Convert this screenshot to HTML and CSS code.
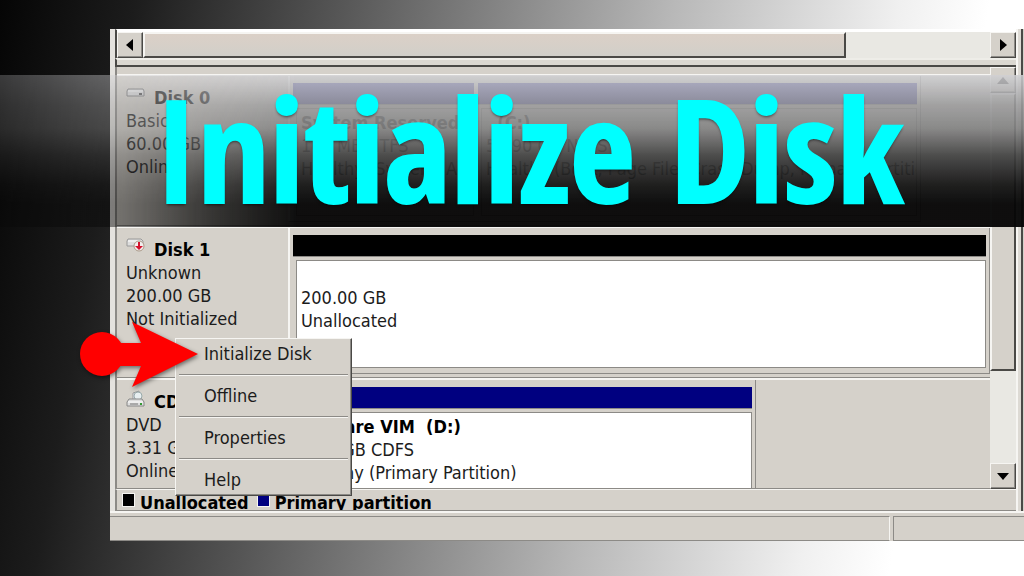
FILE: index.html
```html
<!DOCTYPE html>
<html lang="en">
<head>
  <meta charset="utf-8">
  <title>Initialize Disk</title>
  <link rel="stylesheet" href="styles.css">
</head>
<body>
  <main class="stage">
    <div class="window">
      <div class="pane">
        <div class="hscroll">
          <button class="scroll-btn" aria-label="Scroll left"><svg width="8" height="12"><path d="M7 0v12L0 6z"/></svg></button>
          <div class="hthumb"></div>
          <div class="htrack"></div>
          <button class="scroll-btn" aria-label="Scroll right"><svg width="8" height="12"><path d="M1 0v12l7-6z"/></svg></button>
        </div>
        <div class="splitter"></div>

        <div class="disk-view">
          <div class="disks">
            <section class="disk">
              <div class="disk-info">
                <h2><svg class="icon" width="20" height="16" viewBox="0 0 20 16"><path d="M2 3h15l1 2v5H1V5z" fill="#ddd" stroke="#777"/><path d="M2 5h15" stroke="#fff"/><path d="M13 8h3" stroke="#444" stroke-width="2"/></svg>Disk 0</h2>
                <p>Basic</p>
                <p>60.00 GB</p>
                <p>Online</p>
              </div>
              <div class="volumes split">
                <div class="volume reserved">
                  <div class="bar primary"></div>
                  <div class="block"><b>System Reserved</b><p>100 MB NTFS</p><p>Healthy (System, Active)</p></div>
                </div>
                <div class="volume">
                  <div class="bar primary"></div>
                  <div class="block"><b>&nbsp; (C:)</b><p>59.90 GB NTFS</p><p>Healthy (Boot, Page File, Crash Dump, Primary Partition)</p></div>
                </div>
              </div>
            </section>

            <section class="disk">
              <div class="disk-info">
                <h2><svg class="icon" width="20" height="16" viewBox="0 0 20 16"><path d="M2 1h13l2 2v5H1V3z" fill="#ddd" stroke="#999"/><path d="M2 3h12" stroke="#fff"/><circle cx="13" cy="8" r="5" fill="#f3eeee" stroke="#a98"/><path d="M12 4h2v4h3l-4 4-4-4h3z" fill="#d3112c"/></svg>Disk 1</h2>
                <p>Unknown</p>
                <p>200.00 GB</p>
                <p>Not Initialized</p>
              </div>
              <div class="volumes">
                <div class="volume">
                  <div class="bar unallocated"></div>
                  <div class="block"><b>&nbsp;</b><p>200.00 GB</p><p>Unallocated</p></div>
                </div>
              </div>
            </section>

            <section class="disk">
              <div class="disk-info">
                <h2><svg class="icon" width="20" height="18" viewBox="0 0 20 18"><path d="M7 9V3l6-2v7" fill="#eef" stroke="#999"/><circle cx="12" cy="6" r="4" fill="#e8eef0" stroke="#9aa"/><path d="M3 9h13l2 3v4H1v-4z" fill="#ddd" stroke="#888"/><path d="M2 12h15" stroke="#fff"/><path d="M4 14h8" stroke="#777"/><path d="M14 14h2" stroke="#393" stroke-width="2"/></svg>CD-ROM 0</h2>
                <p>DVD</p>
                <p>3.31 GB</p>
                <p>Online</p>
              </div>
              <div class="volumes cd">
                <div class="volume">
                  <div class="bar primary"></div>
                  <div class="block"><b>VMware VIM&nbsp; (D:)</b><p>3.31 GB CDFS</p><p>Healthy (Primary Partition)</p></div>
                </div>
              </div>
            </section>
          </div>

          <div class="vscroll">
            <button class="scroll-btn" aria-label="Scroll up"><svg width="12" height="7"><path d="M0 7h12L6 0z"/></svg></button>
            <div class="vthumb"></div>
            <div class="vtrack"></div>
            <button class="scroll-btn" aria-label="Scroll down"><svg width="12" height="7"><path d="M0 0h12L6 7z"/></svg></button>
          </div>
        </div>

        <div class="legend">
          <span class="key"><span class="swatch unallocated"></span>Unallocated</span>
          <span class="key"><span class="swatch primary"></span>Primary partition</span>
        </div>
      </div>

      <div class="statusbar">
        <div class="status-main"></div>
        <div class="status-side"></div>
      </div>
    </div>

    <div class="banner">
      <h1>Initialize Disk</h1>
    </div>

    <div class="menu" role="menu">
      <button role="menuitem">Initialize Disk</button>
      <hr>
      <button role="menuitem">Offline</button>
      <hr>
      <button role="menuitem">Properties</button>
      <hr>
      <button role="menuitem">Help</button>
    </div>

    <svg class="pointer" width="124" height="72" viewBox="0 0 124 72" fill="#f00">
      <circle cx="23" cy="36" r="22"/>
      <path d="M23 25H62L53 4L119 36L53 69L62 48H23z"/>
    </svg>
  </main>
</body>
</html>
```
FILE: styles.css
```css
:root {
  --face: #d5d1ca;
  --light: #f6f5f2;
  --shade: #8c8a86;
  --dark: #4a4946;
  --navy: #000080;
  --line: 23px;
}

* {
  box-sizing: border-box;
}

body {
  margin: 0;
  font-family: "DejaVu Sans Condensed", "Open Sans", sans-serif;
  font-size: 18px;
  line-height: var(--line);
  color: #1c1c1c;
}

h1, h2, p {
  margin: 0;
}

button {
  font: inherit;
  color: inherit;
}

.stage {
  position: relative;
  min-height: 100vh;
  padding: 29px 0 35px 110px;
  overflow: hidden;
  background: linear-gradient(100deg, #050505 0%, #1c1c1c 12%, #555 30%, #b8b8b8 60%, #f0f0f0 80%, #fff 88%);
}

.window {
  background: var(--face);
}

.pane {
  margin-right: 8px;
  border-left: 5px solid #e4e2de;
  box-shadow: 2px 0 var(--light), 5px 0 #dddad4, 7px 0 var(--dark);
}

.hscroll {
  display: flex;
  height: 29px;
  padding-top: 2px;
  border-top: 1px solid #fff;
  border-left: 2px solid var(--dark);
  background: #fff;
}

.scroll-btn {
  display: grid;
  place-items: center;
  width: 26px;
  height: 26px;
  padding: 0;
  flex: none;
  background: var(--face);
  border: 1px solid;
  border-color: var(--light) var(--dark) var(--dark) var(--light);
  box-shadow: inset -1px -1px var(--shade);
}

.hthumb {
  flex: 702;
  background: linear-gradient(#dbd0c7, #d1cfc9);
  border: 2px solid;
  border-color: var(--light) var(--dark) var(--dark) var(--light);
}

.htrack {
  flex: 145;
  background: #e9e8e3;
}

.splitter {
  height: 9px;
  border-top: 2px solid #eeede8;
  border-bottom: 2px solid var(--dark);
  border-left: 2px solid var(--dark);
  background: #dbd8d1;
}

.disk-view {
  display: flex;
  border-left: 2px solid var(--shade);
}

.disks {
  flex: 1;
  min-width: 0;
  padding-top: 7px;
}

.disk {
  display: flex;
  height: 152px;
  border-top: 2px solid var(--light);
  border-bottom: 1px solid var(--shade);
}

.disk:last-child {
  height: 111px;
  overflow: hidden;
}

.disk-info {
  width: 171px;
  padding: 10px 0 0 9px;
  white-space: nowrap;
}

.disk h2 {
  display: flex;
  gap: 8px;
  font-size: 18px;
  line-height: var(--line);
  color: #000;
}

.volumes {
  flex: 1;
  display: flex;
  gap: 4px;
  min-width: 0;
  padding: 7px 3px 5px 3px;
  margin-bottom: 3px;
  border-left: 2px solid var(--light);
  border-right: 1px solid var(--shade);
  border-bottom: 1px solid var(--shade);
}

.volumes.split {
  flex: none;
  width: 633px;
}

.volumes.cd {
  flex: none;
  width: 468px;
  height: 145px;
}

.volume {
  flex: 1;
  min-width: 0;
  display: flex;
  flex-direction: column;
  gap: 3px;
}

.volume.reserved {
  flex: none;
  width: 181px;
}

.bar {
  height: 22px;
  border-bottom: 1px solid var(--shade);
}

.primary {
  background: var(--navy);
}

.unallocated {
  background: #000;
}

.block {
  flex: 1;
  padding: 2px 0 0 4px;
  margin-left: 3px;
  background: #fff;
  border: 1px solid var(--shade);
  white-space: nowrap;
  overflow: hidden;
}

.block b {
  color: #000;
}

.split .block {
  background: var(--face);
}

.vscroll {
  display: flex;
  flex-direction: column;
  width: 26px;
}

.vthumb {
  flex: 276;
  background: var(--face);
  border: 2px solid;
  border-color: var(--light) var(--dark) var(--dark) var(--light);
}

.vtrack {
  flex: 93;
  background: #e9e8e3;
}

.legend {
  display: flex;
  gap: 8px;
  height: 22px;
  padding-left: 5px;
  overflow: hidden;
  font-weight: bold;
  color: #000;
  line-height: 26px;
  border-top: 1px solid var(--light);
  border-left: 2px solid var(--shade);
  border-bottom: 1px solid var(--shade);
}

.key {
  display: flex;
  gap: 5px;
}

.swatch {
  width: 13px;
  height: 14px;
  margin-top: 3px;
  border: 1px solid var(--light);
}

.statusbar {
  display: flex;
  gap: 3px;
  height: 30px;
  padding-top: 3px;
  border-top: 2px solid var(--light);
}

.status-main,
.status-side {
  border: 1px solid var(--shade);
  border-right-color: var(--light);
}

.status-main {
  flex: 1;
  border-left: 0;
}

.status-side {
  width: 131px;
  border-right: 0;
}

/* glossy strip that fades in from the left */
.banner {
  position: absolute;
  left: 0;
  right: 0;
  top: 75px;
  height: 152px;
  padding-left: 155px;
}

.banner::before {
  content: "";
  position: absolute;
  inset: 0;
  background: linear-gradient(rgba(208, 208, 211, .85) 0%, rgba(154, 154, 155, .89) 20%, rgba(130, 130, 130, .91) 35%, rgba(66, 66, 66, .93) 53%, rgba(20, 20, 20, .94) 72%, rgba(6, 6, 6, .96) 85%, rgba(6, 6, 6, .96) 100%);
  -webkit-mask-image: linear-gradient(to right, rgba(0, 0, 0, .3) 0%, rgba(0, 0, 0, .5) 12%, rgba(0, 0, 0, .78) 20%, #000 29%);
  mask-image: linear-gradient(to right, rgba(0, 0, 0, .3) 0%, rgba(0, 0, 0, .5) 12%, rgba(0, 0, 0, .78) 20%, #000 29%);
}

.banner h1 {
  position: relative;
  font-family: "Noto Sans SemiCondensed", "Open Sans SemiCondensed", "Noto Sans Condensed", "Open Sans Condensed", "Liberation Sans Narrow", Roboto, sans-serif;
  font-size: 142px;
  line-height: 146px;
  font-weight: bold;
  color: #0ff;
  -webkit-text-stroke: 2px #0ff;
  white-space: nowrap;
  text-shadow: 0 2px 3px rgba(0, 0, 0, .6);
}

.menu {
  position: absolute;
  left: 175px;
  top: 338px;
  width: 177px;
  padding: 0 3px;
  background: var(--face);
  border: 1px solid;
  border-color: var(--light) var(--dark) var(--dark) var(--light);
  box-shadow: inset -1px -1px var(--shade);
}

.menu button {
  display: block;
  width: 100%;
  height: 30px;
  padding: 0 0 2px 25px;
  background: none;
  border: 0;
  text-align: left;
}

.menu hr {
  height: 2px;
  margin: 5px 0;
  border: 0;
  border-top: 1px solid var(--shade);
  border-bottom: 1px solid var(--light);
}

.pointer {
  position: absolute;
  left: 79px;
  top: 318px;
  filter: drop-shadow(1px 2px 2px rgba(0, 0, 0, .5));
}
```
